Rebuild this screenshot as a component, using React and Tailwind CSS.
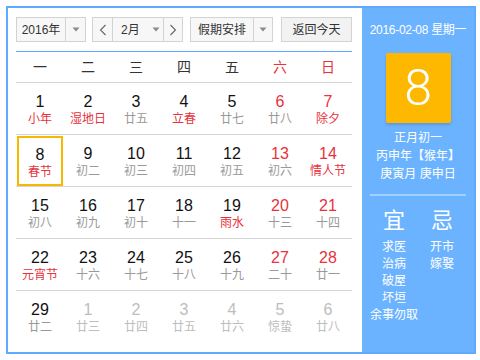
import React from "react";

const CJK = { fontFamily: '"Liberation Sans", "Noto Sans CJK SC", sans-serif' };

const weeks = [
  [
    ["1", "小年", "n", "r"],
    ["2", "湿地日", "n", "r"],
    ["3", "廿五", "n", "g"],
    ["4", "立春", "n", "r"],
    ["5", "廿七", "n", "g"],
    ["6", "廿八", "r", "g"],
    ["7", "除夕", "r", "r"],
  ],
  [
    ["8", "春节", "n", "r", true],
    ["9", "初二", "n", "g"],
    ["10", "初三", "n", "g"],
    ["11", "初四", "n", "g"],
    ["12", "初五", "n", "g"],
    ["13", "初六", "r", "g"],
    ["14", "情人节", "r", "r"],
  ],
  [
    ["15", "初八", "n", "g"],
    ["16", "初九", "n", "g"],
    ["17", "初十", "n", "g"],
    ["18", "十一", "n", "g"],
    ["19", "雨水", "n", "r"],
    ["20", "十三", "r", "g"],
    ["21", "十四", "r", "g"],
  ],
  [
    ["22", "元宵节", "n", "r"],
    ["23", "十六", "n", "g"],
    ["24", "十七", "n", "g"],
    ["25", "十八", "n", "g"],
    ["26", "十九", "n", "g"],
    ["27", "二十", "r", "g"],
    ["28", "廿一", "r", "g"],
  ],
  [
    ["29", "廿二", "n", "g"],
    ["1", "廿三", "o", "o"],
    ["2", "廿四", "o", "o"],
    ["3", "廿五", "o", "o"],
    ["4", "廿六", "o", "o"],
    ["5", "惊蛰", "o", "o"],
    ["6", "廿八", "o", "o"],
  ],
];

const numColor = { n: "text-[#111]", r: "text-[#e8323c]", o: "text-[#bdbdbd]" };
const lunColor = { g: "text-[#999]", r: "text-[#e8323c]", o: "text-[#bdbdbd]" };

function Caret() {
  return (
    <svg width="8" height="5" viewBox="0 0 8 5">
      <path d="M0.5 0.5 L7.5 0.5 L4 4.5 Z" fill="#8a8a8a" />
    </svg>
  );
}

function Chevron({ dir }) {
  return (
    <svg width="8" height="12" viewBox="0 0 8 12">
      <polyline
        points={dir === "l" ? "6.5,1 1.5,6 6.5,11" : "1.5,1 6.5,6 1.5,11"}
        fill="none"
        stroke="#666"
        strokeWidth="1.1"
      />
    </svg>
  );
}

export default function App() {
  return (
    <div className="w-[480px] h-[360px] bg-white p-[6px]" style={CJK}>
      <div className="w-[470px] h-[348px] border-2 border-[#62aaff] flex bg-white">
        {/* Left */}
        <div className="w-[354px] pl-[8px] pr-[10px] pt-[9px] flex flex-col">
          <div className="flex items-center h-[25px] text-[12px] text-[#333] whitespace-nowrap">
            <div className="w-[70px] h-[25px] border border-[#d3d3d3] bg-[#f7f7f7] flex">
              <div className="w-[48px] flex items-center justify-center">2016年</div>
              <div className="flex-1 border-l border-[#d3d3d3] flex items-center justify-center">
                <Caret />
              </div>
            </div>
            <div className="ml-[6px] w-[91px] h-[25px] border border-[#d3d3d3] bg-[#f7f7f7] flex">
              <div className="w-[20px] flex items-center justify-center border-r border-[#d3d3d3]">
                <Chevron dir="l" />
              </div>
              <div className="flex-1 flex items-center pl-[8px]">
                <span>2月</span>
                <span className="ml-[12px] flex items-center"><Caret /></span>
              </div>
              <div className="w-[19px] flex items-center justify-center border-l border-[#d3d3d3]">
                <Chevron dir="r" />
              </div>
            </div>
            <div className="ml-[7px] w-[83px] h-[25px] border border-[#d3d3d3] bg-[#f7f7f7] flex">
              <div className="w-[62px] flex items-center justify-center">假期安排</div>
              <div className="flex-1 border-l border-[#d3d3d3] flex items-center justify-center">
                <Caret />
              </div>
            </div>
            <div className="ml-[8px] w-[71px] h-[25px] border border-[#d3d3d3] bg-[#f2f2f2] flex items-center justify-center">
              返回今天
            </div>
          </div>
          <div className="mt-[9px] border-b border-[#62aaff]" />
          <div className="grid grid-cols-7 h-[31px] border-b border-[#d6d6d6] text-[14px] items-center text-center">
            {["一", "二", "三", "四", "五", "六", "日"].map((d, i) => (
              <div key={d} className={i >= 5 ? "text-[#e8323c]" : "text-[#333]"}>
                {d}
              </div>
            ))}
          </div>
          {weeks.map((w, ri) => (
            <div
              key={ri}
              className={`grid grid-cols-7 h-[52px] ${ri < 4 ? "border-b border-[#d6d6d6]" : ""}`}
            >
              {w.map(([num, lun, nc, lc, sel], ci) => (
                <div key={ci} className="flex justify-center">
                  <div
                    className={`w-[46px] flex flex-col items-center ${
                      sel ? "border-2 border-[#f9b800] pt-[8px] mt-[1px] h-[50px]" : "pt-[10px]"
                    }`}
                  >
                    <div className={`text-[16px] leading-[18px] ${numColor[nc]}`}>{num}</div>
                    <div className={`text-[12px] leading-[16px] ${lunColor[lc]}`}>{lun}</div>
                  </div>
                </div>
              ))}
            </div>
          ))}
        </div>
        {/* Right */}
        <div className="flex-1 bg-[#6cb3ff] flex flex-col items-center pt-[14px] text-white">
          <div className="text-[12px] leading-[16px] whitespace-nowrap tracking-[-0.3px]">2016-02-08 星期一</div>
          <div className="mt-[15px] w-[65px] h-[70px] bg-[#ffb800] rounded-[2px] shadow-[0_2px_3px_rgba(0,0,0,0.15)] flex items-center justify-center">
            <span className="text-[50px] leading-none font-light" style={{ fontFamily: '"Roboto", "Noto Sans", sans-serif' }}>
              8
            </span>
          </div>
          <div className="mt-[6px] text-[12px] leading-[18px] text-center whitespace-nowrap">
            <div>正月初一</div>
            <div>丙申年【猴年】</div>
            <div>庚寅月 庚申日</div>
          </div>
          <div className="mt-[11px] w-[96px] h-[2px] bg-[#a3cfff]" />
          <div className="mt-[12px] flex w-[96px]">
            <div className="w-[48px] flex flex-col items-center">
              <div className="text-[22px] leading-[26px]">宜</div>
              <div className="mt-[5px] text-[12px] leading-[17px] flex flex-col items-center">
                <div>求医</div>
                <div>治病</div>
                <div>破屋</div>
                <div>坏垣</div>
                <div className="whitespace-nowrap">余事勿取</div>
              </div>
            </div>
            <div className="w-[48px] flex flex-col items-center">
              <div className="text-[22px] leading-[26px]">忌</div>
              <div className="mt-[5px] text-[12px] leading-[17px] flex flex-col items-center">
                <div>开市</div>
                <div>嫁娶</div>
              </div>
            </div>
          </div>
        </div>
      </div>
    </div>
  );
}
